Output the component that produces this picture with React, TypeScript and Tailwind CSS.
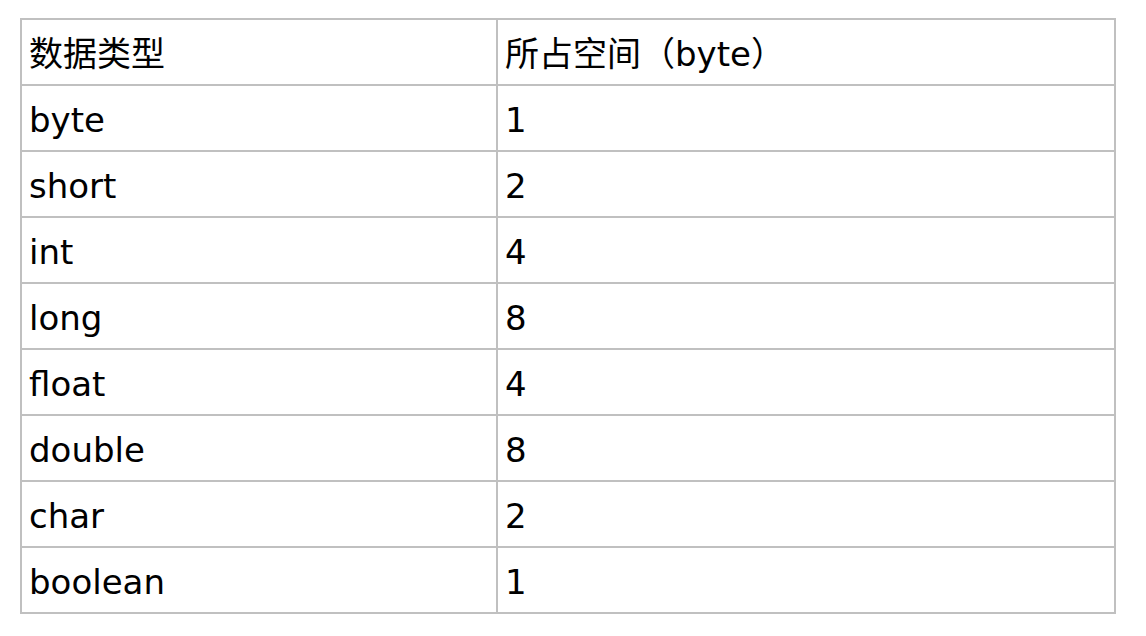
const ROWS: [string, string][] = [
  ["数据类型", "所占空间（byte）"],
  ["byte", "1"],
  ["short", "2"],
  ["int", "4"],
  ["long", "8"],
  ["float", "4"],
  ["double", "8"],
  ["char", "2"],
  ["boolean", "1"],
];

export default function App() {
  return (
    <div
      className="w-[1146px] h-[636px] bg-white pt-[18px] pl-[20px]"
      style={{ fontFamily: '"DejaVu Sans", Verdana, "Noto Sans CJK SC", sans-serif' }}
    >
      <table className="border-collapse w-[1096px] text-[34px] text-black">
        <tbody>
          {ROWS.map(([a, b]) => (
            <tr key={a} className="h-[66px]">
              <td className="w-[476px] border-2 border-[#c0c0c0] pl-[7px] pr-2 pt-[4px] pb-0 align-middle leading-none">
                {a}
              </td>
              <td className="border-2 border-[#c0c0c0] pl-[7px] pr-2 pt-[4px] pb-0 align-middle leading-none">
                {b}
              </td>
            </tr>
          ))}
        </tbody>
      </table>
    </div>
  );
}
